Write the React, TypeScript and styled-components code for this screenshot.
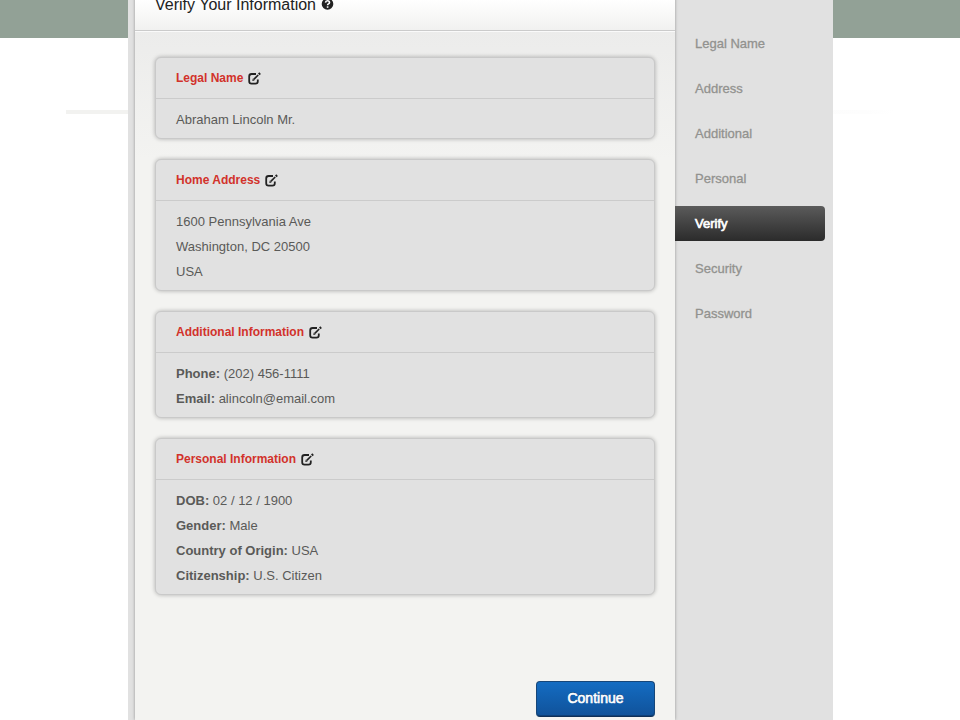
import React from "react";
import styled, { createGlobalStyle } from "styled-components";

const GlobalStyle = createGlobalStyle`
  *, *::before, *::after { box-sizing: border-box; }
  body {
    margin: 0;
    background: #fff;
    font-family: "Liberation Sans", Arial, Helvetica, sans-serif;
    font-size: 13px;
    color: #5a5a58;
  }
`;

const Page = styled.div`
  min-height: 100vh;
  overflow: hidden;
  padding: 0 127px 0 128px;
  background:
    linear-gradient(to right, #f2f2f0 62px, #fdfdfd 800px, #ffffff) 66px 110px / calc(100% - 132px) 4px no-repeat,
    linear-gradient(#92a196, #92a196) 0 0 / 100% 38px no-repeat,
    #fff;
`;

const Shell = styled.div`
  display: grid;
  grid-template-columns: minmax(0, 1fr) 158px;
  min-height: calc(100vh + 20px);
  margin-top: -20px;
  padding-left: 7px;
  background: #e1e1e1;
`;

const Main = styled.main`
  display: flex;
  flex-direction: column;
  background: linear-gradient(#ececeb 50px, #f3f3f1 180px);
  box-shadow: 0 0 3px rgba(0, 0, 0, 0.35);
`;

const Header = styled.header`
  display: flex;
  align-items: center;
  gap: 5px;
  height: 51px;
  padding: 0 20px;
  border-bottom: 1px solid #cbcbcb;
  background: linear-gradient(#ffffff 20px, #f1f1f0);
  box-shadow: 0 1px 0 #fafafa;
`;

const Title = styled.h1`
  margin: 0;
  font-size: 16px;
  line-height: 20px;
  font-weight: 400;
  color: #222;
`;

const IconButton = styled.button`
  display: inline-flex;
  padding: 0;
  border: 0;
  background: none;
  color: #222;
  cursor: pointer;
`;

const HelpButton = styled(IconButton)`
  padding-bottom: 2px;
`;

const Cards = styled.div`
  display: flex;
  flex-direction: column;
  gap: 20px;
  padding: 26px 20px 0;
`;

const Card = styled.section`
  border: 1px solid #c9c9c9;
  border-radius: 6px;
  background: #e1e1e1;
  box-shadow: 0 0 4px rgba(0, 0, 0, 0.28);
`;

const CardHeader = styled.div`
  display: flex;
  align-items: center;
  gap: 5px;
  height: 41px;
  padding: 0 20px;
  border-bottom: 1px solid #cbcbcb;
`;

const CardTitle = styled.h2`
  margin: 0;
  font-size: 12px;
  line-height: 16px;
  font-weight: 700;
  color: #d2322b;
`;

const CardBody = styled.div`
  padding: 8px 20px 6px;
`;

const Line = styled.p`
  margin: 0;
  line-height: 25px;
`;

const Actions = styled.div`
  display: flex;
  justify-content: flex-end;
  padding: 86px 20px 3px;
`;

const Continue = styled.button`
  width: 119px;
  height: 36px;
  padding: 0 0 2px;
  border: 1px solid #164679;
  border-bottom-color: #0d2f57;
  border-radius: 4px;
  background: linear-gradient(#146cc2, #10529a);
  box-shadow: inset 0 -1px 0 #0e4079;
  font: 400 14px/20px "Liberation Sans", Arial, sans-serif;
  color: #fff;
  -webkit-text-stroke: 0.6px #fff;
  text-shadow: 0 -1px 0 rgba(0, 0, 0, 0.35);
  cursor: pointer;
`;

const Steps = styled.nav`
  display: flex;
  flex-direction: column;
  gap: 10px;
  padding: 46px 8px 0 0;
`;

const Step = styled.a<{ $active?: boolean }>`
  position: relative;
  height: 35px;
  padding: 0 20px;
  border-radius: 0 4px 4px 0;
  line-height: 35px;
  text-decoration: none;
  color: ${({ $active }) => ($active ? "#fff" : "#92928f")};
  background: ${({ $active }) => ($active ? "linear-gradient(#5b5b5b, #2b2b2b)" : "none")};
  -webkit-text-stroke: ${({ $active }) => ($active ? "0.7px #fff" : "0.3px #92928f")};
`;

const EditIcon = () => (
  <svg width="13" height="13" viewBox="0 0 13 13" fill="none" stroke="currentColor" aria-hidden="true">
    <path d="M8 2H3.6Q1.2 2 1.2 4.4V9.2Q1.2 11.6 3.6 11.6H7.4Q9.8 11.6 9.8 9.2V7.6" strokeWidth="1.8" />
    <path d="M5.8 7.4L10.2 3" strokeWidth="1.7" />
    <path d="M4.3 8.9L4.8 6.6L6.6 8.4Z" fill="currentColor" stroke="none" />
    <path d="M10.8 2.4L12.1 1.1" strokeWidth="2.2" />
  </svg>
);

const HelpIcon = () => (
  <svg width="13" height="13" viewBox="0 0 13 13" fill="none" aria-hidden="true">
    <circle cx="6.5" cy="6" r="5.8" fill="currentColor" />
    <path d="M4.5 4.6Q4.7 2.8 6.5 2.8Q8.5 2.8 8.5 4.5Q8.5 5.3 7.5 5.9Q6.6 6.4 6.6 7.2" stroke="#fff" strokeWidth="1.6" />
    <path d="M5.8 8.3H7.4V9.8H5.8Z" fill="#fff" />
  </svg>
);

type Entry = { label?: string; value: string };

const sections: { title: string; entries: Entry[] }[] = [
  { title: "Legal Name", entries: [{ value: "Abraham Lincoln Mr." }] },
  {
    title: "Home Address",
    entries: [{ value: "1600 Pennsylvania Ave" }, { value: "Washington, DC 20500" }, { value: "USA" }],
  },
  {
    title: "Additional Information",
    entries: [
      { label: "Phone:", value: "(202) 456-1111" },
      { label: "Email:", value: "alincoln@email.com" },
    ],
  },
  {
    title: "Personal Information",
    entries: [
      { label: "DOB:", value: "02 / 12 / 1900" },
      { label: "Gender:", value: "Male" },
      { label: "Country of Origin:", value: "USA" },
      { label: "Citizenship:", value: "U.S. Citizen" },
    ],
  },
];

const steps = ["Legal Name", "Address", "Additional", "Personal", "Verify", "Security", "Password"];

export default function App() {
  return (
    <>
      <GlobalStyle />
      <Page>
        <Shell>
          <Main>
            <Header>
              <Title>Verify Your Information</Title>
              <HelpButton type="button" aria-label="Help">
                <HelpIcon />
              </HelpButton>
            </Header>
            <Cards>
              {sections.map(({ title, entries }) => (
                <Card key={title}>
                  <CardHeader>
                    <CardTitle>{title}</CardTitle>
                    <IconButton type="button" aria-label={`Edit ${title}`}>
                      <EditIcon />
                    </IconButton>
                  </CardHeader>
                  <CardBody>
                    {entries.map(({ label, value }) => (
                      <Line key={value}>
                        {label && <strong>{label} </strong>}
                        {value}
                      </Line>
                    ))}
                  </CardBody>
                </Card>
              ))}
            </Cards>
            <Actions>
              <Continue type="button">Continue</Continue>
            </Actions>
          </Main>
          <Steps aria-label="Steps">
            {steps.map((step) => (
              <Step
                key={step}
                href={`#${step.toLowerCase().replace(" ", "-")}`}
                $active={step === "Verify"}
                aria-current={step === "Verify" ? "step" : undefined}
              >
                {step}
              </Step>
            ))}
          </Steps>
        </Shell>
      </Page>
    </>
  );
}
